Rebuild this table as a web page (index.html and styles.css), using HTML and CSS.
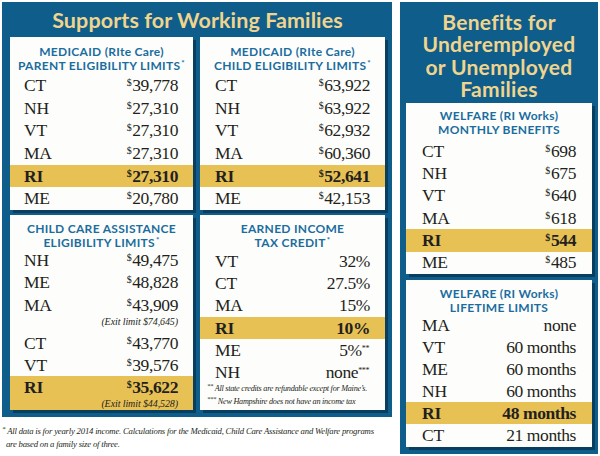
FILE: index.html
```html
<!DOCTYPE html>
<html>
<head>
<meta charset="utf-8">
<link rel="stylesheet" href="styles.css">
</head>
<body>
<div class="page">
  <div class="left">
    <section class="panel panel-main">
      <h1 class="panel-title">Supports for Working Families</h1>
      <div class="grid">
        <div class="card card-a">
          <h2 class="card-title">MEDICAID (RIte Care)<br>PARENT ELIGIBILITY LIMITS<sup>*</sup></h2>
          <div class="row"><span>CT</span><span class="val"><sup>$</sup>39,778</span></div>
          <div class="row"><span>NH</span><span class="val"><sup>$</sup>27,310</span></div>
          <div class="row"><span>VT</span><span class="val"><sup>$</sup>27,310</span></div>
          <div class="row"><span>MA</span><span class="val"><sup>$</sup>27,310</span></div>
          <div class="row hl"><span>RI</span><span class="val"><sup>$</sup>27,310</span></div>
          <div class="row"><span>ME</span><span class="val"><sup>$</sup>20,780</span></div>
        </div>
        <div class="card card-a card-r">
          <h2 class="card-title">MEDICAID (RIte Care)<br>CHILD ELIGIBILITY LIMITS<sup>*</sup></h2>
          <div class="row"><span>CT</span><span class="val"><sup>$</sup>63,922</span></div>
          <div class="row"><span>NH</span><span class="val"><sup>$</sup>63,922</span></div>
          <div class="row"><span>VT</span><span class="val"><sup>$</sup>62,932</span></div>
          <div class="row"><span>MA</span><span class="val"><sup>$</sup>60,360</span></div>
          <div class="row hl"><span>RI</span><span class="val"><sup>$</sup>52,641</span></div>
          <div class="row"><span>ME</span><span class="val"><sup>$</sup>42,153</span></div>
        </div>
        <div class="card card-b">
          <h2 class="card-title">CHILD CARE ASSISTANCE<br>ELIGIBILITY LIMITS<sup>*</sup></h2>
          <div class="row"><span>NH</span><span class="val"><sup>$</sup>49,475</span></div>
          <div class="row"><span>ME</span><span class="val"><sup>$</sup>48,828</span></div>
          <div class="group">
            <div class="row"><span>MA</span><span class="val"><sup>$</sup>43,909</span></div>
            <div class="note">(Exit limit $74,645)</div>
          </div>
          <div class="row"><span>CT</span><span class="val"><sup>$</sup>43,770</span></div>
          <div class="row"><span>VT</span><span class="val"><sup>$</sup>39,576</span></div>
          <div class="group hl">
            <div class="row"><span>RI</span><span class="val"><sup>$</sup>35,622</span></div>
            <div class="note">(Exit limit $44,528)</div>
          </div>
        </div>
        <div class="card card-b card-r">
          <h2 class="card-title">EARNED INCOME<br>TAX CREDIT<sup>*</sup></h2>
          <div class="row row-s"><span>VT</span><span class="val">32%</span></div>
          <div class="row row-s"><span>CT</span><span class="val">27.5%</span></div>
          <div class="row row-s"><span>MA</span><span class="val">15%</span></div>
          <div class="row row-s hl"><span>RI</span><span class="val">10%</span></div>
          <div class="row row-s"><span>ME</span><span class="val">5%<sup class="ast">**</sup></span></div>
          <div class="row row-s"><span>NH</span><span class="val">none<sup class="ast">***</sup></span></div>
          <div class="fnotes">
            <div><sup class="ast">**</sup> All state credits are refundable except for Maine’s.</div>
            <div><sup class="ast">***</sup> New Hampshire does not have an income tax</div>
          </div>
        </div>
      </div>
    </section>
    <p class="foot"><sup class="ast">*</sup> All data is for yearly 2014 income. Calculations for the Medicaid, Child Care Assistance and Welfare programs<br>&nbsp;&nbsp;are based on a family size of three.</p>
  </div>
  <section class="panel panel-side">
    <h1 class="side-title"><span class="tl">Benefits for</span><span class="tl">Underemployed</span><span class="tl">or Unemployed</span><span class="tl">Families</span></h1>
    <div class="card card-c">
      <h2 class="card-title">WELFARE (RI Works)<br>MONTHLY BENEFITS</h2>
      <div class="row row-m"><span>CT</span><span class="val"><sup>$</sup>698</span></div>
      <div class="row row-m"><span>NH</span><span class="val"><sup>$</sup>675</span></div>
      <div class="row row-m"><span>VT</span><span class="val"><sup>$</sup>640</span></div>
      <div class="row row-m"><span>MA</span><span class="val"><sup>$</sup>618</span></div>
      <div class="row row-m hl"><span>RI</span><span class="val"><sup>$</sup>544</span></div>
      <div class="row row-m"><span>ME</span><span class="val"><sup>$</sup>485</span></div>
    </div>
    <div class="card card-d">
      <h2 class="card-title">WELFARE (RI Works)<br>LIFETIME LIMITS</h2>
      <div class="row row-s"><span>MA</span><span class="val">none</span></div>
      <div class="row row-s"><span>VT</span><span class="val">60 months</span></div>
      <div class="row row-s"><span>ME</span><span class="val">60 months</span></div>
      <div class="row row-s"><span>NH</span><span class="val">60 months</span></div>
      <div class="row row-s hl"><span>RI</span><span class="val">48 months</span></div>
      <div class="row row-s"><span>CT</span><span class="val">21 months</span></div>
    </div>
  </section>
</div>
</body>
</html>
```

FILE: styles.css
```css
* { box-sizing: border-box; }
html, body { margin: 0; padding: 0; }
body {
  width: 600px;
  height: 456px;
  overflow: hidden;
  background: #ffffff;
  font-family: "Liberation Serif", "Times New Roman", serif;
  color: #231f20;
}
.page {
  display: flex;
  gap: 8px;
  padding: 2px 2px 0 2px;
}
.left {
  width: 390px;
  display: flex;
  flex-direction: column;
}
.panel {
  background: #0e5d8b;
}
.panel-main {
  height: 415px;
  padding: 0 7px 7px 8px;
  display: flex;
  flex-direction: column;
}
.panel-title {
  margin: 0;
  height: 35px;
  line-height: 36px;
  text-align: center;
  font-family: "Lato", "Open Sans", sans-serif;
  font-weight: 700;
  font-size: 21.5px;
  color: #f1d48d;
  letter-spacing: 0.1px;
}
.grid {
  display: grid;
  grid-template-columns: 183px 185px;
  grid-template-rows: 173px 195px;
  column-gap: 7px;
  row-gap: 5px;
}
.card {
  background: #fdfdfb;
  box-shadow: 3px 3px 0 #0a3e5f;
  overflow: hidden;
  display: flex;
  flex-direction: column;
}
.card-title {
  margin: 0;
  text-align: center;
  font-family: "Lato", "Open Sans", sans-serif;
  font-weight: 700;
  font-size: 12px;
  line-height: 14px;
  letter-spacing: 0.3px;
  color: #1b6d9f;
}
.card-title sup {
  font-size: 8px;
  vertical-align: 4px;
  line-height: 0;
  margin-left: 1px;
}
.card-a { padding-top: 8px; }
.card-a .card-title { margin-bottom: 1px; }
.card-b { padding-top: 7px; }
.row {
  display: flex;
  justify-content: space-between;
  align-items: center;
  height: 23px;
  padding: 0 15px 0 14px;
  font-size: 17.5px;
  letter-spacing: -0.2px;
}
.val { letter-spacing: -0.4px; }
.card-r .row { padding: 0 15px 0 15px; }
.row-s { height: 22.3px; }
.row-m { height: 22.6px; padding: 0 16px; }
.card-b .row { height: 22.5px; }
.card-b .row.row-s { height: 22.3px; }
.val sup {
  font-size: 10px;
  vertical-align: 5px;
  line-height: 0;
  margin-right: 1px;
}
.val sup.ast, .ast {
  font-size: 8px;
  vertical-align: 5px;
  line-height: 0;
}
.hl, .hl .row { background: #e8c155; font-weight: 700; }
.group { display: flex; flex-direction: column; }
.note {
  text-align: right;
  padding: 0 15px 0 14px;
  font-style: italic;
  font-size: 10px;
  line-height: 12px;
  height: 16.5px;
  letter-spacing: -0.1px;
  margin-top: -0.5px;
}
.group.hl .note { font-weight: 400; height: 12px; }
.fnotes {
  margin-top: -2px;
  padding-left: 7px;
  font-style: italic;
  font-size: 8.2px;
  line-height: 13px;
  letter-spacing: -0.25px;
  white-space: nowrap;
}
.fnotes .ast { font-size: 6.5px; vertical-align: 3px; }
.foot {
  margin: 8px 0 0 0;
  font-style: italic;
  font-size: 8.7px;
  line-height: 13px;
  letter-spacing: -0.2px;
  white-space: nowrap;
}
.foot .ast { font-size: 7px; vertical-align: 3px; }
.panel-side {
  width: 198px;
  height: 452px;
  padding: 9px 6px 7px 6px;
  display: flex;
  flex-direction: column;
}
.side-title {
  margin: 0;
  height: 92px;
  display: flex;
  flex-direction: column;
  align-items: center;
  font-family: "Lato", "Open Sans", sans-serif;
  font-weight: 700;
  font-size: 21px;
  color: #f1d48d;
  letter-spacing: 0.3px;
}
.tl {
  display: block;
  height: 22.4px;
  line-height: 22.4px;
}
.card-c { height: 171px; padding-top: 6px; }
.card-c .card-title, .card-d .card-title { line-height: 13.5px; }
.card-c .card-title { margin-bottom: 4px; }
.card-d { height: 167px; margin-top: 6px; padding-top: 7px; }
.card-d .row { padding: 0 16px; height: 22px; }
```
